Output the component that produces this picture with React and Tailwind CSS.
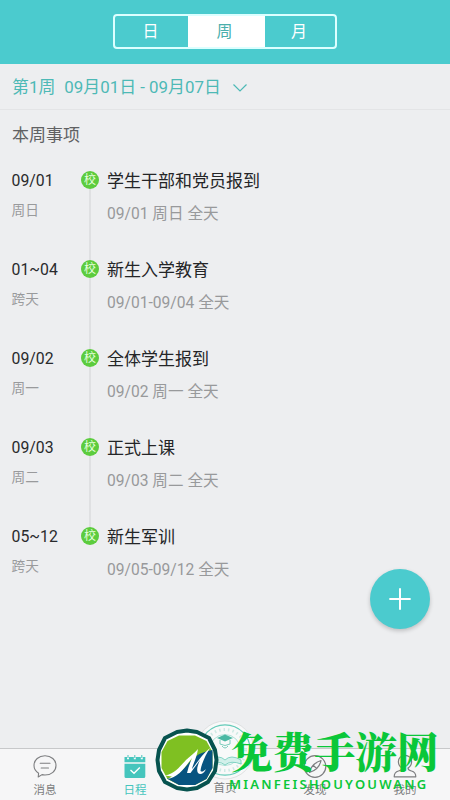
import { Plus } from 'lucide-react';

const tabs = [
  { label: '日', width: 'w-[73px] pr-0.5' },
  { label: '周', width: 'w-[77px] pr-1' },
  { label: '月', width: 'w-[70px] pr-0.5' },
];

const events = [
  { date: '09/01', day: '周日', title: '学生干部和党员报到', time: '09/01 周日 全天' },
  { date: '01~04', day: '跨天', title: '新生入学教育', time: '09/01-09/04 全天' },
  { date: '09/02', day: '周一', title: '全体学生报到', time: '09/02 周一 全天' },
  { date: '09/03', day: '周二', title: '正式上课', time: '09/03 周二 全天' },
  { date: '05~12', day: '跨天', title: '新生军训', time: '09/05-09/12 全天' },
];

const MessageIcon = () => (
  <svg viewBox="0 0 24 24" className="h-6 w-6" fill="none" stroke="currentColor" strokeWidth="1.1" strokeLinecap="round" strokeLinejoin="round">
    <path d="M5.6 19.2C2.8 17.4 1 14.8 1 11.4C1 5.8 5.8 1.8 12 1.8S23 5.8 23 11.4S18.4 21 12 21C11 21 10 20.9 9 20.6L5.2 23Z" />
    <path d="M7.2 9.2H17M8.2 14H15.5" />
  </svg>
);

const CalendarIcon = () => (
  <svg viewBox="0 0 24 24" className="h-6 w-6">
    <path fill="currentColor" d="M1.5 3H4V5.2H6V3H10.8V5.2H12.8V3H17.8V5.2H19.8V3H22.3V8.2H1.5ZM4.5 1H5.5V4H4.5ZM11.3 1H12.3V4H11.3ZM18.3 1H19.3V4H18.3ZM1.5 9.8H22.3V22.5Q22.3 24 20.8 24H3Q1.5 24 1.5 22.5Z" />
    <path d="M7.5 16L11 19.2L16.8 13.4" fill="none" stroke="white" strokeWidth="1.4" />
  </svg>
);

const CompassIcon = () => (
  <svg viewBox="0 0 24 24" className="h-6 w-6" fill="none" stroke="currentColor" strokeWidth="1.2" strokeLinejoin="round">
    <circle cx="12" cy="12.5" r="10.8" />
    <path d="M18 6.5C17 11.5 13 16.5 6.5 18.5C7.5 13 12 8.5 18 6.5ZM10 11L13.5 14.5" />
  </svg>
);

const PersonIcon = () => (
  <svg viewBox="0 0 24 24" className="h-6 w-6" fill="none" stroke="currentColor" strokeWidth="1.2" strokeLinejoin="round">
    <path d="M9 14C6.4 12.4 5.4 10 5.4 7.6C5.4 4 8.2 1.4 12 1.4S18.6 4 18.6 7.6C18.6 10 17.6 12.4 15 14C15 16 16 16.4 18.5 17C21.5 17.8 22.8 19.4 22.8 22.8H1.2C1.2 19.4 2.5 17.8 5.5 17C8 16.4 9 16 9 14Z" />
  </svg>
);

const SchoolBadge = () => (
  <svg viewBox="0 0 60 60" className="h-[60px] w-[60px]" fill="none">
    <circle cx="30" cy="30" r="29" fill="#f8f9f9" stroke="#dfe1e2" />
    <circle cx="30" cy="30" r="25.2" stroke="#63cbb8" strokeWidth="1.2" />
    <circle cx="30" cy="30" r="15.5" stroke="#a5dfd4" strokeWidth="0.9" />
    <circle cx="30" cy="30" r="20.5" stroke="#cdeae4" strokeWidth="3" strokeDasharray="1.5 3" />
    <path d="M22 18L30 14.5L38 18L30 21.5Z" fill="#4bb9a4" />
    <path d="M25 20V24Q30 27 35 24V20M27 26Q30 30 33 26" stroke="#7accbb" />
    <path d="M14 40Q24 34 30 40Q36 34 46 40V44Q36 40 30 45Q24 40 14 44Z" fill="#d2f0ea" stroke="#6bcbb9" strokeWidth="0.8" />
  </svg>
);

const WatermarkLogo = () => (
  <svg viewBox="0 0 64 64" className="h-16 w-16 shrink-0">
    <path d="M22 4L32 2.5L42 4L54 10L60 22L61.5 32L60 43L53 54L42 60L32 61.5L22 60L10 54L4 43L2.5 32L4 22L10 10Z" fill="white" stroke="#07534f" strokeWidth="4" strokeLinejoin="round" />
    <path d="M24 7.5H40L51.5 13L57.5 24V40L51.5 51L40 57H24L12.5 51L6.5 40V24L12.5 13Z" fill="#7fc022" />
    {/* Blue slope under the white swoosh */}
    <path d="M12 50.5C26 48 32 35 40 29C45 25 51 23 57.5 22V40L51.5 51L40 57H24Z" fill="#075480" />
    <path d="M10 47.5C20 46 26 37 31 32C35 28 40 25 43 21C42 29 38 36 37 41C42 35 47 26 55 20C50 28 46 37 45.5 43C47 44.5 49 43 51 41C49 46 45 47 43 45C41 42 43 36 45 32L35.5 45H32C33 40 35 35 37 30C30 39 23 50 12.5 51L17 48.5Z" fill="white" />
  </svg>
);

const navItems = [
  { label: '消息', icon: <MessageIcon /> },
  { label: '日程', icon: <CalendarIcon />, active: true },
  { label: '首页', icon: null },
  { label: '发现', icon: <CompassIcon /> },
  { label: '我的', icon: <PersonIcon /> },
];

const App = () => {
  return (
    <div className="relative flex h-[800px] w-[450px] flex-col overflow-hidden bg-[#edeef0] font-[Roboto,'Noto_Sans_CJK_SC',sans-serif]">
      {/* Day / week / month switch */}
      <header className="flex h-16 shrink-0 justify-center bg-[#4bcbce] pt-3.5">
        <div className="flex h-[35px] w-[224px] overflow-hidden rounded-[4px] border-2 border-[#dcffff]">
          {tabs.map((tab) => (
            <button
              key={tab.label}
              className={`flex items-center justify-center text-base ${tab.width} ${
                tab.label === '周' ? 'bg-white text-[#4aafac]' : 'text-white'
              }`}
            >
              {tab.label}
            </button>
          ))}
        </div>
      </header>

      <div className="flex h-[46px] shrink-0 items-center border-b border-[#e3e4e6] px-3 pt-0.5 text-[16.9px] text-[#4db9b6]">
        <span>第1周</span>
        <span className="ml-[9px]">09月01日 - 09月07日</span>
        <svg viewBox="0 0 14 8" className="ml-3 h-2 w-3.5" fill="none" stroke="currentColor" strokeWidth="1.2">
          <path d="M0.5 0.5L7 7L13.5 0.5" />
        </svg>
      </div>

      <main className="flex-1">
        <h1 className="px-3 pt-[13px] text-[17px] leading-6 text-[#606163]">本周事项</h1>
        <div className="pt-[22px]">
          {events.map((event, index) => (
            <div key={event.title} className="flex h-[89px] pl-[11.5px]">
              <div className="w-[69.5px]">
                <p className="text-[15.8px] leading-6 text-[#292a2c]">{event.date}</p>
                <p className="mt-[7px] text-[13.7px] leading-5 text-[#999a9c]">{event.day}</p>
              </div>
              <div className="flex w-[18px] flex-col items-center pt-0.5">
                <span className="flex h-[18px] w-[18px] shrink-0 items-center justify-center rounded-full bg-[#5ccc3e] text-xs leading-none text-[#e6ffdf]">
                  校
                </span>
                {index < events.length - 1 && <span className="-mb-0.5 w-0.5 flex-1 bg-[#dfe0e2]" />}
              </div>
              <div className="ml-2">
                <p className="text-[17px] leading-6 text-[#242527]">{event.title}</p>
                <p className="mt-[9px] text-[15.6px] leading-6 text-[#98999b]">{event.time}</p>
              </div>
            </div>
          ))}
        </div>
      </main>

      <button className="absolute top-[569px] left-[370px] flex h-[60px] w-[60px] items-center justify-center rounded-full bg-[#4bcbce] text-white shadow-[0_2px_4px_#0003]">
        <Plus className="h-[34px] w-[34px]" strokeWidth={1.4} />
      </button>

      <nav className="flex h-[52px] shrink-0 border-t border-[#c7c8ca] bg-[#f6f6f7]">
        {navItems.map((item) => (
          <div key={item.label} className={`flex flex-1 flex-col items-center pt-[5px] ${item.active ? 'text-[#45c5bd]' : 'text-[#7d7e80]'}`}>
            <div className="h-6">{item.icon}</div>
            <span className={`text-[11.5px] leading-4 ${item.icon ? 'mt-1' : 'mt-0.5'}`}>{item.label}</span>
          </div>
        ))}
      </nav>
      <div className="absolute top-[720px] left-[195px]">
        <SchoolBadge />
      </div>

      {/* Watermark */}
      <div className="absolute top-[728px] left-[155px] flex text-[#0ac739]">
        <WatermarkLogo />
        <div className="-mt-0.5 ml-3 whitespace-nowrap font-['Noto_Serif_CJK_SC','Noto_Sans_CJK_SC',serif]">
          <p className="text-[41.5px] leading-[48px] font-black">免费手游网</p>
          <p className="mt-0.5 ml-[-2px] font-['Noto_Sans',sans-serif] text-[13px] leading-4 font-semibold tracking-[2.2px]">MIANFEISHOUYOUWANG</p>
        </div>
      </div>
    </div>
  );
};

export default App;
